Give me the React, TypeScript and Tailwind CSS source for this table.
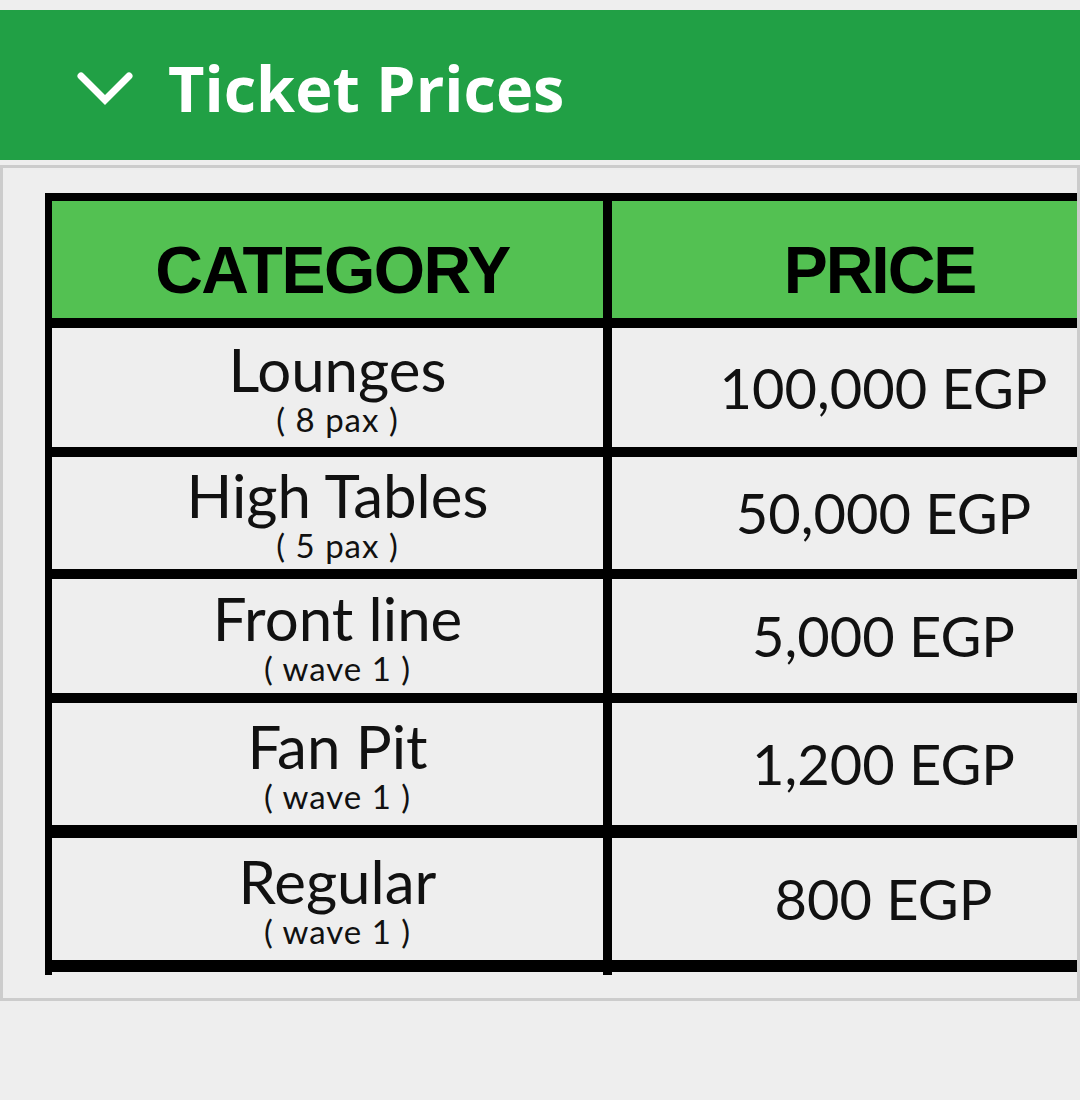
import React from "react";

const rows = [
  { name: "Lounges", sub: "( 8 pax )", price: "100,000 EGP", h: "h-[119px]", line: "h-[10px]" },
  { name: "High Tables", sub: "( 5 pax )", price: "50,000 EGP", h: "h-[112px]", line: "h-[10px]" },
  { name: "Front line", sub: "( wave 1 )", price: "5,000 EGP", h: "h-[114px]", line: "h-[10px]" },
  { name: "Fan Pit", sub: "( wave 1 )", price: "1,200 EGP", h: "h-[122px]", line: "h-[13px]" },
  { name: "Regular", sub: "( wave 1 )", price: "800 EGP", h: "h-[122px]", line: "h-[12px]" },
];

export default function App() {
  return (
    <div className="min-h-[1100px] bg-[#eeeeee] pt-[10px]">
      {/* Accordion header */}
      <div className="flex h-[150px] items-center bg-[#21a045] pl-[75px]">
        <svg width="60" height="44" viewBox="0 0 60 44" className="shrink-0">
          <polyline
            points="6,13 30,37 54,13"
            fill="none"
            stroke="#ffffff"
            strokeWidth="7"
            strokeLinecap="round"
            strokeLinejoin="miter"
          />
        </svg>
        <h2
          className="ml-[33px] pt-[4px] text-[63px] font-bold leading-[65px] text-white"
          style={{ fontFamily: '"Open Sans", "Noto Sans", sans-serif' }}
        >
          Ticket Prices
        </h2>
      </div>

      {/* Panel */}
      <div className="mt-[5px] h-[836px] overflow-hidden border-[3px] border-[#cccccc] bg-[#eeeeee] pl-[42px] pt-[25px]">
        <div className="w-[1109px] shrink-0">
          <div className="flex flex-col bg-black px-[7px] pt-[8px]">
            {/* Header row */}
            <div className="flex h-[117px] gap-[9px]">
              <div
                className="flex w-[551px] items-center justify-center bg-[#53c152] pl-[10px] pt-[20px] text-[66px] font-bold leading-[66px] tracking-[-1.5px] text-black"
                style={{ fontFamily: '"Liberation Sans", Arial, sans-serif' }}
              >
                CATEGORY
              </div>
              <div
                className="flex w-[535px] items-center justify-center bg-[#53c152] pt-[20px] text-[66px] font-bold leading-[66px] tracking-[-2px] text-black"
                style={{ fontFamily: '"Liberation Sans", Arial, sans-serif' }}
              >
                PRICE
              </div>
            </div>
            <div className="h-[10px]" />
            {rows.map((r) => (
              <React.Fragment key={r.name}>
                <div className={`flex gap-[9px] ${r.h}`}>
                  <div
                    className="flex w-[551px] flex-col items-center justify-center bg-[#eeeeee] pl-[20px] text-[#111111]"
                    style={{ fontFamily: 'Lato, "Open Sans", sans-serif' }}
                  >
                    <div className="text-[60px] leading-[60px]">{r.name}</div>
                    <div className="mt-[4px] text-[33px] leading-[33px] tracking-[1px]">{r.sub}</div>
                  </div>
                  <div
                    className="flex w-[535px] items-center justify-center bg-[#eeeeee] pl-[8px] text-[56px] leading-[56px] text-[#111111]"
                    style={{ fontFamily: 'Lato, "Open Sans", sans-serif' }}
                  >
                    {r.price}
                  </div>
                </div>
                <div className={r.line} />
              </React.Fragment>
            ))}
          </div>
          {/* stubs of vertical lines below bottom rule */}
          <div className="flex h-[3px]">
            <div className="w-[7px] bg-black" />
            <div className="w-[551px]" />
            <div className="w-[9px] bg-black" />
          </div>
        </div>
      </div>
    </div>
  );
}
